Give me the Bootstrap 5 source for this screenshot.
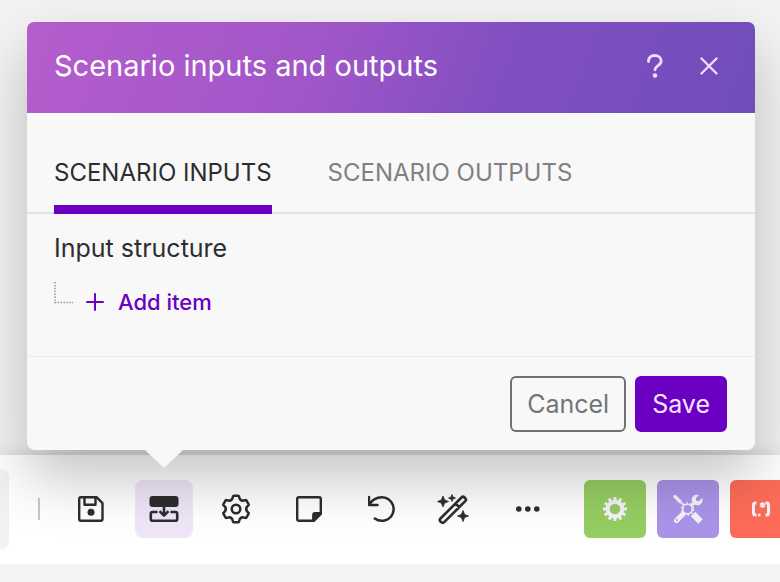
<!DOCTYPE html>
<html lang="en">
<head>
<meta charset="utf-8">
<meta name="viewport" content="width=device-width, initial-scale=1">
<title>Scenario inputs and outputs</title>
<link rel="stylesheet" href="https://cdn.jsdelivr.net/npm/bootstrap@5.3.0/dist/css/bootstrap.min.css">
<style>
  body { font-family: Inter, "Liberation Sans", sans-serif; background: #f3f3f3; color: #2d2d2f; overflow: hidden; }
  .panel { margin: 22px 25px 0 27px; background: #f8f8f8; border-radius: 8px; box-shadow: 0 28px 60px rgba(0, 0, 0, .24); z-index: 2; }
  .panel-head { background: linear-gradient(110deg, #b55dcd, #a056c8 40%, #814fc0 65%, #704dbc); border-radius: 7px 7px 0 0; padding: 20px 30px 23px 27px; min-height: 91px; color: #fff; }
  .panel-head h1 { font-size: 29px; line-height: 40px; font-weight: 400; }
  .head-icons { gap: 22px; }
  .head-btn { width: 32px; height: 40px; color: #f3dcfb; }
  .head-btn:hover { color: #fff; }
  .tabs { padding: 36px 27px 0; gap: 56px; border-bottom: 2px solid #e2e2e4; }
  .tab-btn { font-size: 24px; line-height: 48px; color: #808082; border-bottom: 9px solid transparent; margin-bottom: -2px; padding-bottom: 8px; }
  .tab-btn.active { color: #2d2d2f; border-color: #6b00c2; }
  .structure { padding: 16px 27px 38px; border-bottom: 1px solid #ececee; }
  .structure h2 { font-size: 25px; line-height: 36px; font-weight: 400; }
  .branch { width: 19px; height: 22px; margin-right: 13px; color: #8c8c8e; }
  .add-btn { color: #6b00c2; font-size: 22px; line-height: 32px; font-weight: 500; gap: 14px; }
  .panel-foot { padding: 19px 28px 18px; gap: 9px; }
  .act { font-size: 25px; line-height: 36px; padding: 8px 15px; border: 2px solid #707173; border-radius: 6px; color: #737476; }
  .act-save { background: #6b00c2; border-color: #6b00c2; color: #f5e6ff; }
  .arrow { position: absolute; left: 118px; top: 100%; width: 38px; height: 18px; background: #f8f8f8; clip-path: polygon(0 0, 100% 0, 50% 100%); }
  .toolbar { margin-top: 5px; padding: 14px 0 15px; background: #fff; box-shadow: 0 3px 20px rgba(0, 0, 0, .22); }
  .toolbar svg { display: block; margin: auto; }
  .edge { width: 9px; height: 80px; background: #f1f2f2; border-radius: 0 8px 8px 0; }
  .rule { width: 2px; height: 22px; background: #c8c8ca; margin: 0 22px 0 29px; }
  .tools { gap: 15px; margin-right: 26px; }
  .tool { width: 58px; height: 58px; border-radius: 8px; color: #2d2d2f; }
  .tool.active { background: #f0e6fa; }
  .apps { gap: 11px; }
  .app { width: 62px; height: 58px; border-radius: 6px; color: #f5f3f8; }
  .app-flow { background: #96ce62; }
  .app-tools { background: #aa94ea; }
  .app-text { background: #fd6c58; }
</style>
<script src="https://cdn.jsdelivr.net/npm/bootstrap@5.3.0/dist/js/bootstrap.bundle.min.js"></script>
</head>
<body>
<section class="panel position-relative" role="dialog" aria-labelledby="dialog-title">
  <header class="panel-head d-flex align-items-center justify-content-between">
    <h1 id="dialog-title" class="m-0">Scenario inputs and outputs</h1>
    <div class="head-icons d-flex">
      <button type="button" class="head-btn btn border-0 p-0 d-flex align-items-center justify-content-center" aria-label="Help">
        <svg width="18" height="24" viewBox="0 0 18 24" fill="none" stroke="currentColor" stroke-width="2.800" stroke-linecap="round"><path d="M2.500 7.500V7c0-3.500 2.800-5.500 6.300-5.500S15.200 3.700 15.200 7c0 4.700-6.200 4.600-6.200 8.800"/><circle cx="9" cy="21.500" r="2.300" fill="currentColor" stroke="none"/></svg>
      </button>
      <button type="button" class="head-btn btn border-0 p-0 d-flex align-items-center justify-content-center" aria-label="Close">
        <svg width="18" height="18" viewBox="0 0 18 18" fill="none" stroke="currentColor" stroke-width="2.300" stroke-linecap="round"><path d="m1.500 1.500 15 15m0-15-15 15"/></svg>
      </button>
    </div>
  </header>
  <div class="tabs d-flex" role="tablist">
    <button type="button" role="tab" aria-selected="true" class="tab-btn active bg-transparent border-top-0 border-start-0 border-end-0 px-0 pt-0">SCENARIO INPUTS</button>
    <button type="button" role="tab" aria-selected="false" class="tab-btn bg-transparent border-top-0 border-start-0 border-end-0 px-0 pt-0">SCENARIO OUTPUTS</button>
  </div>
  <div class="structure">
    <h2 class="m-0">Input structure</h2>
    <div class="d-flex align-items-start pt-3">
      <svg class="branch" viewBox="0 0 19 22" fill="none" stroke="currentColor" stroke-width="1.400" stroke-dasharray="1.400 1.500"><path d="M1 0v20.500h18"/></svg>
      <button type="button" class="add-btn btn border-0 p-0 d-flex align-items-center mt-1">
        <svg width="18" height="18" viewBox="0 0 18 18" fill="none" stroke="currentColor" stroke-width="2" stroke-linecap="round"><path d="M9 1v16M1 9h16"/></svg>
        Add item
      </button>
    </div>
  </div>
  <footer class="panel-foot d-flex justify-content-end">
    <button type="button" class="act bg-transparent">Cancel</button>
    <button type="button" class="act act-save">Save</button>
  </footer>
  <span class="arrow"></span>
</section>
<nav class="toolbar d-flex align-items-center" aria-label="Scenario tools">
  <span class="edge flex-shrink-0"></span>
  <span class="rule flex-shrink-0"></span>
  <div class="tools d-flex flex-shrink-0">
    <button type="button" class="tool btn border-0 p-0" aria-label="Save scenario">
      <svg width="30" height="30" viewBox="0 0 30 30" fill="none" stroke="currentColor" stroke-width="2.400" stroke-linejoin="round"><path d="M5 3.200h15.500l6 6V25q0 1.800-1.800 1.800H5q-1.800 0-1.800-1.800V5q0-1.800 1.800-1.800Z"/><path d="M8.500 3.500v7.300h11V3.500"/><circle cx="15" cy="18.300" r="3.500" fill="currentColor" stroke="none"/></svg>
    </button>
    <button type="button" class="tool active btn border-0 p-0" aria-label="Scenario inputs and outputs">
      <svg width="30" height="30" viewBox="0 0 30 30" fill="none" stroke="currentColor" stroke-width="2.600" stroke-linejoin="round"><rect x=".500" y="2" width="29" height="11" rx="3" fill="currentColor" stroke="none"/><path d="M15 12v9M10.500 17.200 15 21.700l4.500-4.500"/><path d="M8.500 18H3.600q-1.800 0-1.800 1.800V25q0 1.800 1.800 1.800h22.800q1.800 0 1.800-1.800v-5.200q0-1.800-1.800-1.800h-4.900"/></svg>
    </button>
    <button type="button" class="tool btn border-0 p-0" aria-label="Settings">
      <svg width="30" height="30" viewBox="-14 -15 30 30" fill="none" stroke="currentColor" stroke-width="2.500" stroke-linejoin="round" stroke-linecap="round"><path id="tooth" d="M-5.100-8.800C-4-9.400-3.600-10-3.400-11L-3-12.600Q-2.800-13.300-2-13.300H2Q2.800-13.300 3-12.600L3.400-11C3.600-10 4-9.400 5.100-8.800"/><use href="#tooth" transform="rotate(60)"/><use href="#tooth" transform="rotate(120)"/><use href="#tooth" transform="rotate(180)"/><use href="#tooth" transform="rotate(240)"/><use href="#tooth" transform="rotate(300)"/><circle r="4.300"/></svg>
    </button>
    <button type="button" class="tool btn border-0 p-0" aria-label="Notes">
      <svg width="30" height="30" viewBox="1 0 30 30" fill="none" stroke="currentColor" stroke-width="2.400" stroke-linejoin="round"><path d="M5 3.200h20q1.800 0 1.800 1.800v14.800l-7 7H5q-1.800 0-1.800-1.800V5q0-1.800 1.800-1.800Z"/><path d="M19.300 26V21q0-1.700 1.700-1.700h5.500Z" fill="currentColor"/></svg>
    </button>
    <button type="button" class="tool btn border-0 p-0" aria-label="Undo">
      <svg width="30" height="30" viewBox="2 0 30 30" fill="none" stroke="currentColor" stroke-width="2.500" stroke-linecap="round" stroke-linejoin="round"><path d="M3 3v8h8.500M3.200 10.500C6.300 5.500 10.500 3.200 16 3.200A11.800 11.800 0 1 1 8.800 24.500"/></svg>
    </button>
    <button type="button" class="tool btn border-0 p-0" aria-label="Auto-align">
      <svg width="32" height="32" viewBox="3 0 32 32" fill="none" stroke="currentColor" stroke-width="2.600" stroke-linejoin="round" overflow="visible"><path d="M3.500 25.500 24.500 4.500q1.500-1.500 3 0l.700.700q1.500 1.500 0 3L7.200 29.200q-1.500 1.500-3 0l-.700-.700q-1.500-1.500 0-3ZM18.500 10.500l3.700 3.700"/><g fill="currentColor" stroke="currentColor" stroke-width=".8"><path d="m6 3 1.600 3.900L11.500 8.500 7.600 10.100 6 14l-1.600-3.900L.500 8.500l3.900-1.600ZM15 1.500l1 2.500 2.500 1-2.500 1-1 2.500-1-2.500-2.500-1 2.500-1ZM26 17.500l1.600 3.900 3.900 1.600-3.900 1.600L26 28.500l-1.600-3.900-3.900-1.600 3.900-1.600Z"/></g></svg>
    </button>
    <button type="button" class="tool btn border-0 p-0" aria-label="More">
      <svg width="26" height="8" viewBox="2 0 26 8" fill="currentColor"><circle cx="4.800" cy="4" r="2.800"/><circle cx="13.800" cy="4" r="2.800"/><circle cx="22.800" cy="4" r="2.800"/></svg>
    </button>
  </div>
  <div class="apps d-flex flex-shrink-0">
    <button type="button" class="app app-flow btn border-0 p-0" aria-label="Flow control">
      <svg width="26" height="26" viewBox="-13 -13 26 26" fill="none" stroke="currentColor"><circle r="7.300" stroke-width="4"/><g stroke-width="3"><path id="spoke" d="M0-12V-8M0 12V8M-12 0H-8M12 0H8"/><use href="#spoke" transform="rotate(30)"/><use href="#spoke" transform="rotate(60)"/></g></svg>
    </button>
    <button type="button" class="app app-tools btn border-0 p-0" aria-label="Tools">
      <svg width="30" height="30" viewBox="0 0 30 30" fill="none" stroke="currentColor"><circle cx="14.500" cy="15" r="4.800" stroke-width="1.600"/><circle cx="14.500" cy="15" r="6" stroke-width="1.500" stroke-dasharray="1.800 1.970"/><path d="M2 2.500l5 5" stroke-width="3.400" stroke-linecap="round"/><path d="M7 7.500 10.500 11" stroke-width="1.700"/><path d="m20 20 7.500 7.500" stroke-width="6.200"/><path d="m9.500 20.500-6 6" stroke-width="5.200" stroke-linecap="round"/><circle cx="3.800" cy="26" r="1" fill="#a892e8" stroke="none"/><path d="M18.500 11.500 22 8" stroke-width="3"/><path d="M26 1 22.800 4.300l.5 2.400 2.500.5 3.400-3.200q1.200 3.500-1 5.700-2.500 2.300-5.800 1.300l-3.500-3.500q-1-3.300 1.300-5.600Q22.500 0 26 1Z" fill="currentColor" stroke="none"/></svg>
    </button>
    <button type="button" class="app app-text btn border-0 p-0" aria-label="Text parser">
      <svg width="20" height="16" viewBox="0 0 20 16" fill="none" stroke="currentColor"><path d="M5.500 2H4.200Q2.500 2 2.500 3.500v8.500q0 2 2 2h1M14.500 2h1.300Q17.500 2 17.500 3.500v8.500q0 2-2 2h-1" stroke-width="3"/><path d="M7 14h2.500" stroke-width="2.800"/><path d="M11.500 1v6M9 2.500l5 3M14 2.500l-5 3" stroke-width="1.700"/></svg>
    </button>
  </div>
</nav>
</body>
</html>
